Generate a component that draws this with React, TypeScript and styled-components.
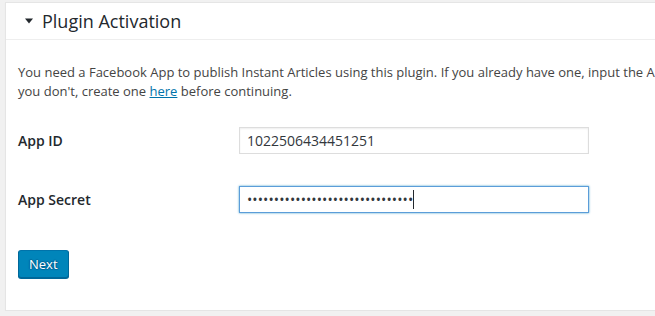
import React from 'react';
import styled, { createGlobalStyle } from 'styled-components';

const GlobalStyle = createGlobalStyle`
  html, body {
    margin: 0;
    padding: 0;
    background: #f1f1f1;
    overflow: hidden;
  }
  body {
    font-family: "Open Sans", "Liberation Sans", sans-serif;
    font-size: 13px;
    color: #444;
  }
`;

const Page = styled.div`
  padding: 2px 0 0 5px;
  width: 760px;
`;

const PostBox = styled.section`
  background: #fff;
  border: 1px solid #e5e5e5;
  box-shadow: 0 1px 1px rgba(0, 0, 0, 0.04);
  height: 309px;
  box-sizing: border-box;
`;

const Header = styled.h2`
  margin: 0;
  height: 36px;
  border-bottom: 1px solid #eee;
  display: flex;
  align-items: center;
  gap: 9px;
  padding: 0 0 0 19px;
  font-size: 18px;
  font-weight: 400;
  color: #23282d;
  > svg {
    flex: none;
  }
`;

const Inside = styled.div`
  padding: 0 12px 12px;
`;

const Intro = styled.p`
  margin: 23px 0 0;
  line-height: 19px;
  white-space: nowrap;
  > a {
    color: #0073aa;
    text-decoration: underline;
  }
`;

const FormGrid = styled.div`
  margin-top: 26px;
  display: grid;
  grid-template-columns: 221px 350px;
  row-gap: 32px;
  align-items: center;
`;

const Label = styled.label`
  font-size: 14px;
  font-weight: 600;
  color: #23282d;
`;

const FieldWrap = styled.div`
  position: relative;
  width: 350px;
`;

const Field = styled.input<{ $focused?: boolean }>`
  display: block;
  box-sizing: border-box;
  width: 350px;
  height: 27px;
  margin: 0;
  padding: 3px 7px;
  font-family: "Open Sans", "Liberation Sans", sans-serif;
  font-size: 14px;
  color: #32373c;
  background: #fff;
  border: 1px solid ${p => (p.$focused ? '#5b9dd9' : '#ddd')};
  box-shadow: ${p =>
    p.$focused ? '0 0 2px rgba(30, 140, 190, 0.8)' : 'inset 0 1px 2px rgba(0, 0, 0, 0.07)'};
  outline: none;
  caret-color: transparent;
  &[type='password'] {
    letter-spacing: 0.1px;
  }
`;

const Caret = styled.span`
  position: absolute;
  left: 174px;
  top: 4px;
  width: 1px;
  height: 19px;
  background: #23282d;
`;

const Actions = styled.div`
  margin-top: 37px;
`;

const PrimaryButton = styled.button`
  height: 28px;
  padding: 0 10px 1px;
  font-family: "Open Sans", "Liberation Sans", sans-serif;
  font-size: 13px;
  color: #fff;
  background: #0085ba;
  border: 1px solid;
  border-color: #0073aa #006799 #006799;
  border-radius: 3px;
  box-shadow: 0 1px 0 #006799;
  text-shadow: 0 -1px 1px #006799, 1px 0 1px #006799, 0 1px 1px #006799, -1px 0 1px #006799;
  cursor: pointer;
`;

function Toggle() {
  return (
    <svg width="8" height="6" viewBox="0 0 8 6">
      <path d="M0 0.5 H8 L4 5.5 Z" fill="#23282d" />
    </svg>
  );
}

function App() {
  return (
    <Page>
      <GlobalStyle />
      <PostBox>
        <Header>
          <Toggle />
          <span>Plugin Activation</span>
        </Header>
        <Inside>
          <Intro>
            You need a Facebook App to publish Instant Articles using this plugin. If you already have one, input the App ID and App Secret below. If
            <br />
            you don't, create one <a href="#">here</a> before continuing.
          </Intro>
          <FormGrid>
            <Label htmlFor="app-id">App ID</Label>
            <FieldWrap>
              <Field id="app-id" type="text" defaultValue="1022506434451251" />
            </FieldWrap>
            <Label htmlFor="app-secret">App Secret</Label>
            <FieldWrap>
              <Field
                id="app-secret"
                type="password"
                $focused
                defaultValue="abcdefghijklmnopqrstuvwxyz01234"
              />
              <Caret />
            </FieldWrap>
          </FormGrid>
          <Actions>
            <PrimaryButton>Next</PrimaryButton>
          </Actions>
        </Inside>
      </PostBox>
    </Page>
  );
}

export default App;
